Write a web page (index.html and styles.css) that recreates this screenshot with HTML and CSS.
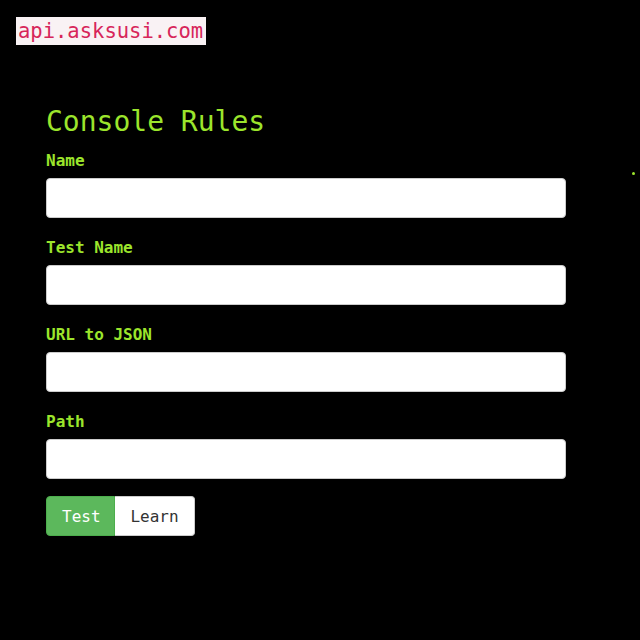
FILE: index.html
```html
<!DOCTYPE html>
<html>
<head>
<meta charset="utf-8">
<link rel="stylesheet" href="styles.css">
</head>
<body>
<header class="top">
  <span class="logo">api.asksusi.com</span>
</header>
<main class="console">
  <h1 class="title">Console Rules</h1>
  <form class="form">
    <div class="field">
      <label class="label">Name</label>
      <input class="input" type="text">
    </div>
    <div class="field">
      <label class="label">Test Name</label>
      <input class="input" type="text">
    </div>
    <div class="field">
      <label class="label">URL to JSON</label>
      <input class="input" type="text">
    </div>
    <div class="field">
      <label class="label">Path</label>
      <input class="input" type="text">
    </div>
    <div class="btn-group">
      <button type="button" class="btn btn-test">Test</button>
      <button type="button" class="btn btn-learn">Learn</button>
    </div>
  </form>
</main>
<span class="dot"></span>
</body>
</html>
```
FILE: styles.css
```css
html, body {
  margin: 0;
  padding: 0;
  background: #000;
  height: 100%;
}
body {
  font-family: "DejaVu Sans Mono", monospace;
  position: relative;
}
.top {
  padding: 17px 0 0 16px;
  height: 28px;
}
.logo {
  display: inline-block;
  background: #f9f2f4;
  color: #d7265a;
  font-size: 20.5px;
  line-height: 28px;
  height: 28px;
  padding: 0 3px 0 2px;
}
.console {
  padding: 0 0 0 46px;
  width: 520px;
}
.title {
  margin: 59px 0 11px 0;
  font-size: 28px;
  font-weight: normal;
  line-height: 36px;
  color: #9ce52c;
}
.form {
  display: flex;
  flex-direction: column;
}
.field {
  display: flex;
  flex-direction: column;
  margin-bottom: 20px;
}
.label {
  font-size: 16px;
  font-weight: bold;
  color: #9ce52c;
  line-height: 20px;
  height: 27px;
}
.input {
  box-sizing: border-box;
  width: 520px;
  height: 40px;
  margin: 0;
  border: 1px solid #ccc;
  border-radius: 4px;
  background: #fff;
  outline: none;
}
.btn-group {
  display: flex;
  margin-top: -3px;
}
.btn {
  font-family: "DejaVu Sans Mono", monospace;
  font-size: 16px;
  height: 40px;
  padding: 0 15px;
  border: 1px solid #ccc;
  margin: 0;
  cursor: pointer;
}
.btn-test {
  background: #5cb85c;
  border-color: #4cae4c;
  color: #fff;
  border-radius: 4px 0 0 4px;
  width: 69px;
}
.btn-learn {
  background: #fff;
  color: #333;
  border-left: none;
  border-radius: 0 4px 4px 0;
  width: 80px;
}
.dot {
  position: absolute;
  left: 632px;
  top: 172px;
  width: 3px;
  height: 3px;
  border-radius: 50%;
  background: #9ce52c;
}
```
